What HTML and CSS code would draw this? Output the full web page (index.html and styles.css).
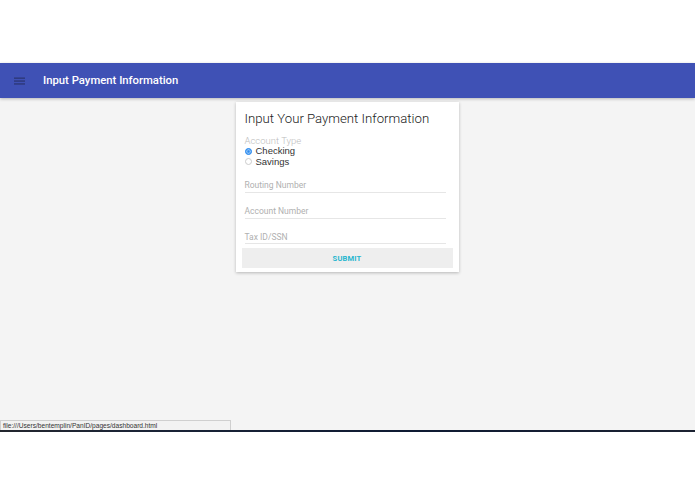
FILE: index.html
```html
<!DOCTYPE html>
<html>
<head>
<meta charset="utf-8">
<link rel="stylesheet" href="styles.css">
</head>
<body>
<div class="top-space"></div>
<div class="app">
  <header class="appbar">
    <svg class="menu" width="11" height="10" viewBox="0 0 11 10"><rect x="0" y="1.5" width="11" height="1.3" fill="#2c3674"/><rect x="0" y="4.4" width="11" height="1.3" fill="#2c3674"/><rect x="0" y="7.3" width="11" height="1.3" fill="#2c3674"/></svg>
    <span class="apptitle">Input Payment Information</span>
  </header>
  <main class="content">
    <div class="card">
      <h1 class="card-title">Input Your Payment Information</h1>
      <div class="label">Account Type</div>
      <div class="radio"><span class="dot on"></span>Checking</div>
      <div class="radio"><span class="dot"></span>Savings</div>
      <div class="field first">Routing Number</div>
      <div class="field">Account Number</div>
      <div class="field">Tax ID/SSN</div>
      <div class="btn">SUBMIT</div>
    </div>
  </main>
  <div class="status">file:///Users/bentemplin/PanID/pages/dashboard.html</div>
</div>
<div class="dock"></div>
</body>
</html>
```
FILE: styles.css
```css
html, body { margin: 0; padding: 0; }
body { background: #fff; font-family: Roboto, "Liberation Sans", sans-serif; width: 695px; height: 494px; overflow: hidden; }
.top-space { height: 63px; background: #fff; }
.app { position: relative; height: 367px; background: #f4f4f4; display: flex; flex-direction: column; }
.appbar { height: 35px; background: #3f51b5; display: flex; align-items: center; box-shadow: 0 1px 3px rgba(0,0,0,0.25); flex: none; }
.menu { margin-left: 14px; }
.apptitle { margin-left: 18px; color: #fff; font-size: 11.3px; font-weight: 500; }
.content { flex: 1; display: flex; justify-content: center; padding-top: 4px; }
.card { width: 223px; height: 170px; background: #fff; box-shadow: 0 1px 3px rgba(0,0,0,0.25); box-sizing: border-box; padding: 8px 6px 0 6px; margin-left: -1px; }
.card-title { margin: 0 0 0 3px; font-size: 13.2px; font-weight: 300; color: #222; line-height: 18px; }
.label { margin: 8px 0 0 3px; font-size: 9.5px; color: #bdbdbd; font-weight: 300; line-height: 10px; }
.radio { margin-left: 3px; font-size: 9.5px; color: #333; line-height: 10.5px; display: flex; align-items: center; font-family: "Liberation Sans", sans-serif; }
.dot { width: 7px; height: 7px; border-radius: 50%; border: 0.8px solid #ccc; margin-right: 4px; box-sizing: border-box; background: #fff; }
.dot.on { background: #2d8cf0; border-color: #2d8cf0; box-shadow: inset 0 0 0 1.3px #8cc0f5; }
.field { margin: 0 7px 0 3px; font-size: 8.5px; color: #b0b0b0; border-bottom: 1px solid #e6e6e6; box-sizing: border-box; line-height: 10px; }
.field.first { margin-top: 8px; height: 18px; padding-top: 5px; }
.field + .field { height: 25.5px; padding-top: 13px; }
.btn { margin-top: 4px; height: 20px; background: #eeeeee; color: #26b6cf; font-size: 7.5px; font-weight: 700; display: flex; align-items: center; justify-content: center; letter-spacing: 0.2px; }
.status { position: absolute; left: 0; bottom: 0; width: 231px; height: 10px; background: #f2f2f2; border: 1px solid #cfcfcf; border-bottom: none; font-size: 6.6px; line-height: 10px; color: #333; padding-left: 2px; box-sizing: border-box; font-family: "Liberation Sans", sans-serif; }
.dock { height: 2px; background: linear-gradient(90deg, #23262e, #1b2436 20%, #0e1a33 60%, #1c2231); }
```
